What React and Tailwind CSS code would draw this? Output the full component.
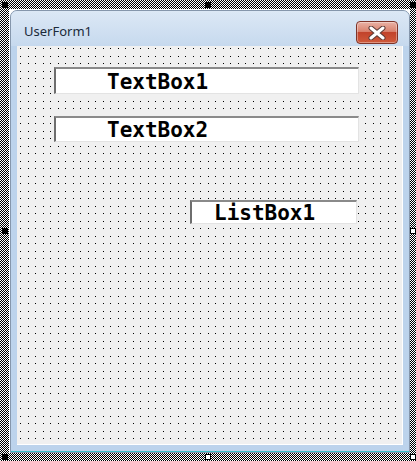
import React from "react";

function CloseButton() {
  return (
    <div className="w-[42px] h-[23px] rounded-[4px] border border-[#7e3328] bg-[linear-gradient(#eab2a5_0%,#d9826e_45%,#c2432b_50%,#cf5a3b_100%)] flex items-center justify-center shadow-[inset_0_0_0_1px_rgba(255,255,255,0.35)]">
      <svg width="18" height="14" viewBox="0 0 18 14">
        <path d="M3 2 L15 12 M15 2 L3 12" stroke="#5a3a36" strokeWidth="5" strokeLinecap="round" />
        <path d="M3 2 L15 12 M15 2 L3 12" stroke="#ffffff" strokeWidth="3" strokeLinecap="round" />
      </svg>
    </div>
  );
}

function Box({ label, className, pad }) {
  return (
    <div className={`bg-white border-t-2 border-l-2 border-t-[#8a8a8a] border-l-[#6e6e6e] border-b border-r border-b-[#e3e3e3] border-r-[#e3e3e3] flex items-center ${className}`}>
      <span className={`font-['DejaVu_Sans_Mono',monospace] font-bold text-[21px] leading-none text-black ${pad}`}>{label}</span>
    </div>
  );
}

function Handle({ className, filled }) {
  return (
    <div className={`absolute w-[6px] h-[6px] border border-black ${filled ? "bg-black" : "bg-white"} ${className}`} />
  );
}

export default function App() {
  return (
    <div className="relative w-[416px] h-[461px] bg-white bg-[repeating-conic-gradient(#000_0_25%,#fff_0_50%)] bg-[length:2px_2px] pt-[9px] pl-[9px]">
      <div className="w-[401px] h-[444px] bg-white pt-px pl-px">
        <div className="w-[400px] h-[443px] rounded-t-[7px] border border-[#8596ab] bg-[#bcd3ec] flex flex-col">
          <div className="h-[35px] flex items-start justify-between rounded-t-[6px] bg-[linear-gradient(#dce8f5,#c6d9ee)] px-[13px]">
            <span className="mt-[14px] font-['Noto_Sans',sans-serif] text-[13px] leading-none text-[#1a2a3a]">UserForm1</span>
            <div className="mt-[10px] -mr-[2px]">
              <CloseButton />
            </div>
          </div>
          <div className="mx-[6px] mb-[6px] flex-1 bg-[#f0f0f0] border-b border-r border-[#ffffff] bg-[conic-gradient(at_1px_1px,transparent_75%,#000_0),conic-gradient(at_1px_1px,transparent_75%,#000_0),conic-gradient(at_1px_1px,transparent_75%,#000_0),conic-gradient(at_1px_1px,transparent_75%,#000_0)] bg-[length:15px_15px] bg-[position:3px_2px,11px_2px,3px_10px,11px_10px] pt-[21px] pl-[37px]">
            <Box label="TextBox1" className="w-[305px] h-[27px]" pad="pl-[51px] pt-[2px]" />
            <Box label="TextBox2" className="w-[305px] h-[26px] mt-[22px]" pad="pl-[51px] pt-[2px]" />
            <Box label="ListBox1" className="w-[167px] h-[24px] mt-[58px] ml-[136px]" pad="pl-[22px] pt-[2px]" />
          </div>
          <div className="h-px bg-[#3fc0c8]" />
        </div>
      </div>
      <Handle filled className="left-[2px] top-[2px]" />
      <Handle filled className="left-[205px] top-[2px]" />
      <Handle filled className="left-[410px] top-[2px]" />
      <Handle filled className="left-[2px] top-[228px]" />
      <Handle className="left-[410px] top-[228px]" />
      <Handle filled className="left-[2px] top-[454px]" />
      <Handle className="left-[205px] top-[454px]" />
      <Handle className="left-[410px] top-[454px]" />
    </div>
  );
}
